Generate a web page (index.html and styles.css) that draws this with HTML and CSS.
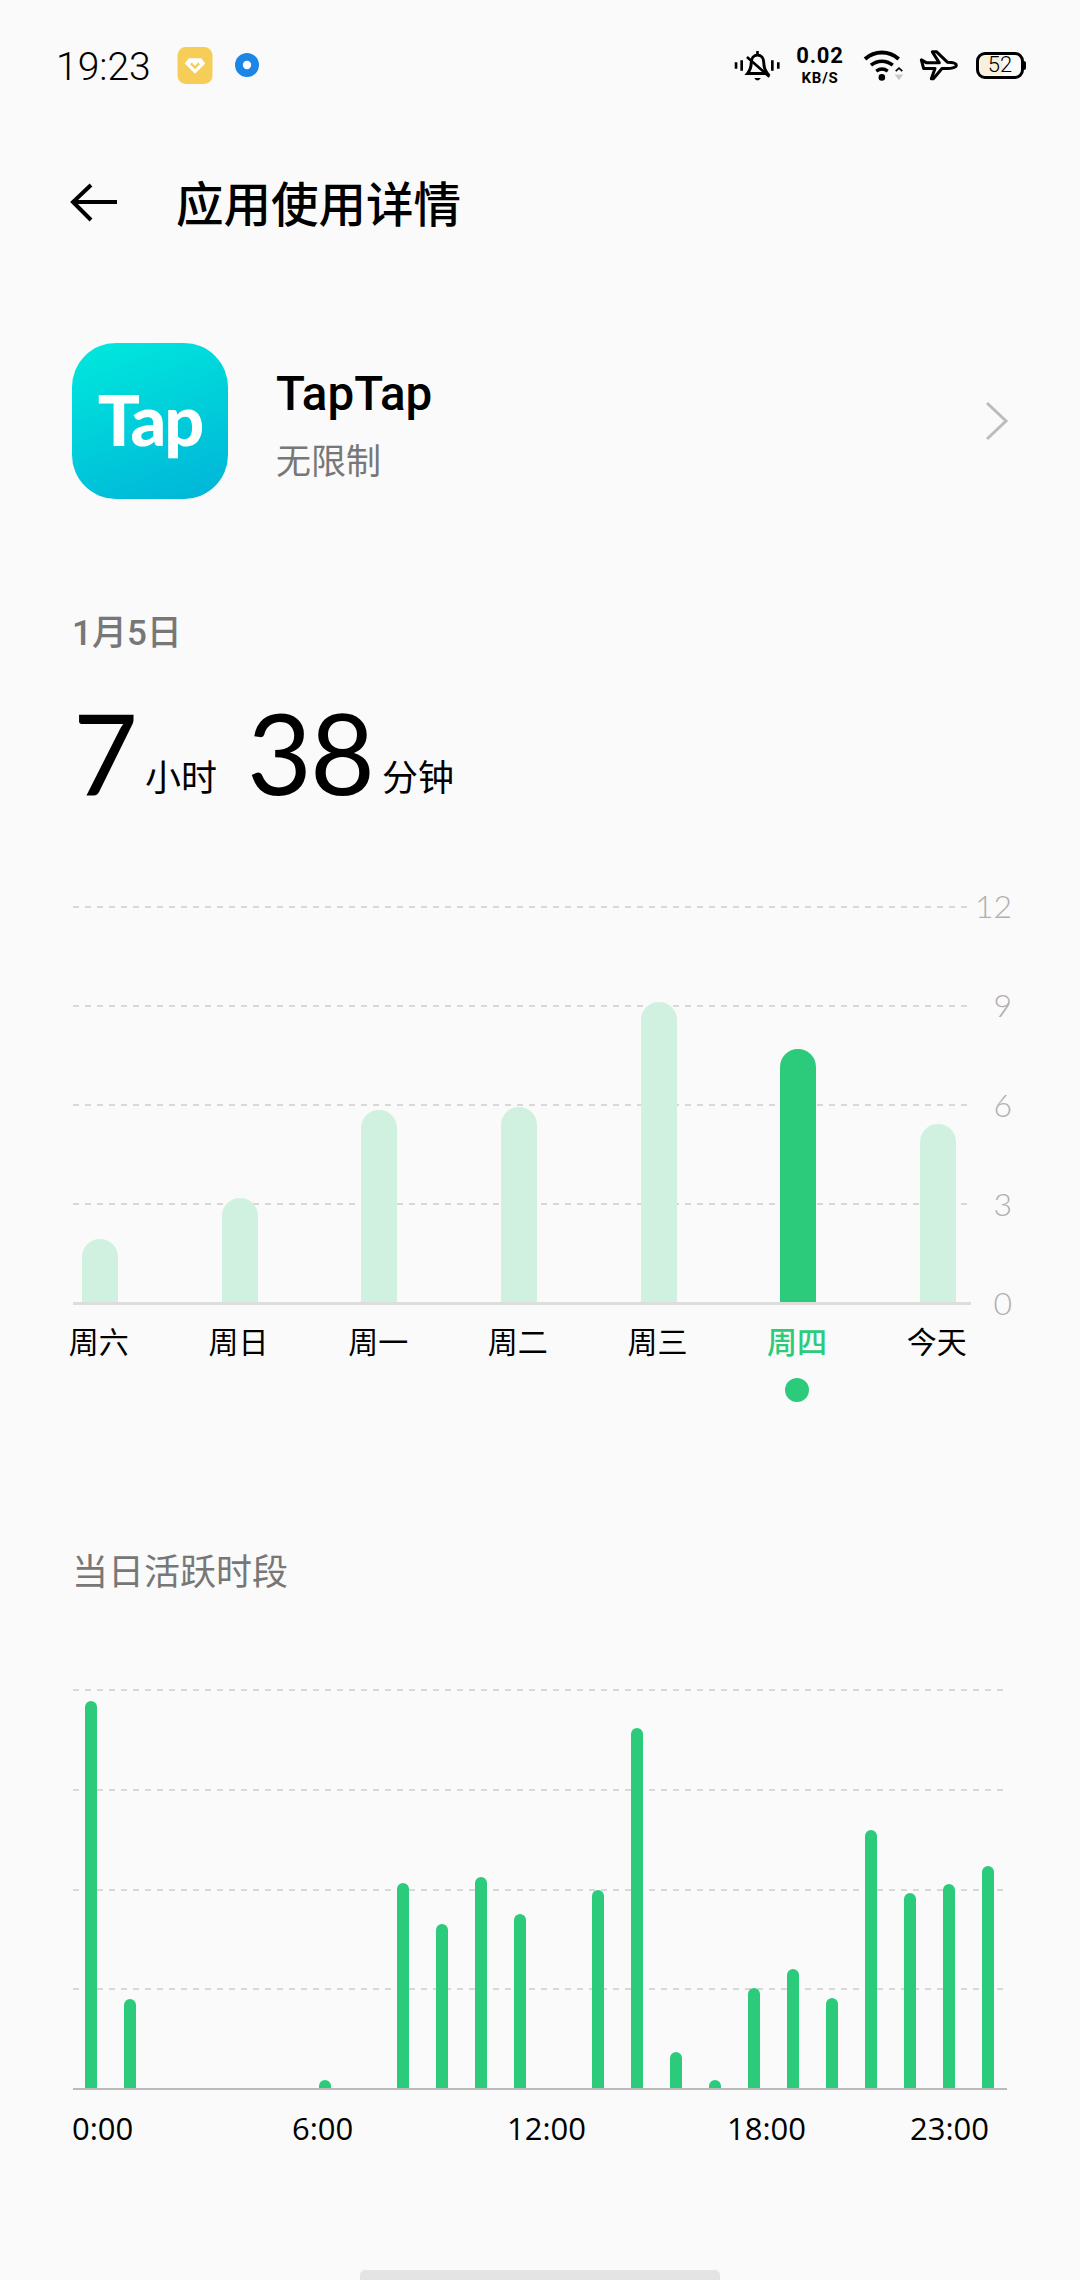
FILE: index.html
```html
<!DOCTYPE html>
<html lang="zh-CN">
<head>
    <meta charset="UTF-8">
    <meta name="viewport" content="width=device-width, initial-scale=1.0">
    <title>应用使用详情</title>
    <link rel="stylesheet" href="styles.css">
</head>
<body>
    <div class="page">
        <!-- 状态栏 -->
        <div class="status-bar">
            <span class="clock">19:23</span>
            <svg class="notif-gem" viewBox="0 0 34 36">
                <rect width="34" height="36" rx="8" fill="#f6cd57"/>
                <path d="M11 11h12l4 5-10 10L7 16z" fill="#fff"/>
                <path d="M13 16l4 4 4-4" fill="none" stroke="#f6cd57" stroke-width="2.4"/>
            </svg>
            <svg class="notif-dot" viewBox="0 0 24 24">
                <circle cx="12" cy="12" r="12" fill="#1b86e6"/>
                <circle cx="12" cy="12" r="4.2" fill="#fff"/>
            </svg>
            <div class="status-right">
                <svg class="ico-bell" viewBox="100 88 140 100">
                    <path d="M105 128v20M122 122v32M215 122v32M233 128v20" fill="none" stroke="#000" stroke-width="8"/>
                    <path d="M140 162c8-10 11-18 11-32 0-14 8-24 19-24s19 10 19 24c0 14 3 22 11 32z" fill="none" stroke="#000" stroke-width="9"/>
                    <path d="M170 94v10M138 112l68 60" fill="none" stroke="#000" stroke-width="8"/>
                    <path d="M160 176h20l-6 7h-8z" fill="#000"/>
                </svg>
                <div class="net-speed"><b>0.02</b><small>KB/S</small></div>
                <svg class="ico-wifi" viewBox="488 88 124 100">
                    <path d="M494 118c30-26 72-26 102 0" fill="none" stroke="#000" stroke-width="12"/>
                    <path d="M512 137c20-16 46-16 66 0" fill="none" stroke="#000" stroke-width="11"/>
                    <path d="M528 155c11-8 24-8 35 0" fill="none" stroke="#000" stroke-width="10"/>
                    <circle cx="545" cy="174" r="10" fill="#000"/>
                    <path d="M587 155l10-9 10 9" fill="none" stroke="#000" stroke-width="5"/>
                    <path d="M584 165h26l-13 18z" fill="#c8c8c8"/>
                </svg>
                <svg class="ico-plane" viewBox="655 90 120 95">
                    <path d="M662 122l16 9h38l-21-33h13l32 31c14 0 27 3 27 9s-13 10-27 10h-16l-26 31h-6l11-31h-34z" fill="none" stroke="#000" stroke-width="9" stroke-linejoin="round"/>
                </svg>
                <div class="battery"><span class="battery-fill"></span><span class="battery-num">52</span></div>
            </div>
        </div>

        <!-- 标题 -->
        <div class="toolbar">
            <svg class="back" viewBox="0 0 48 40">
                <path d="M47 19H4M21 2L3 19l18 18" fill="none" stroke="#000" stroke-width="4"/>
            </svg>
            <h1>应用使用详情</h1>
        </div>

        <!-- 应用信息 -->
        <div class="app-row">
            <div class="app-icon">Tap</div>
            <div class="app-text">
                <div class="app-name">TapTap</div>
                <div class="app-limit">无限制</div>
            </div>
            <svg class="chevron" viewBox="0 0 24 40">
                <path d="M2 2l19 18L2 38" fill="none" stroke="#bcbcbc" stroke-width="3"/>
            </svg>
        </div>

        <div class="date">1月5日</div>
        <div class="total">
            <span class="num">7</span><span class="unit">小时</span>
            <span class="num num-min">38</span><span class="unit">分钟</span>
        </div>

        <!-- 一周使用时长 -->
        <div class="week-chart">
            <div class="week-plot">
                <div class="grid-lines">
                    <i></i><i></i><i></i><i></i>
                </div>
                <div class="week-bars">
                    <span style="height:63px"></span>
                    <span style="height:104px"></span>
                    <span style="height:192px"></span>
                    <span style="height:195px"></span>
                    <span style="height:300px"></span>
                    <span class="active" style="height:253px"></span>
                    <span style="height:178px"></span>
                </div>
            </div>
            <div class="week-axis">
                <span>12</span><span>9</span><span>6</span><span>3</span><span>0</span>
            </div>
        </div>
        <div class="week-labels">
            <div>周六</div>
            <div>周日</div>
            <div>周一</div>
            <div>周二</div>
            <div>周三</div>
            <div class="active">周四<i class="dot"></i></div>
            <div>今天</div>
        </div>

        <div class="section-title">当日活跃时段</div>

        <!-- 当日活跃时段 -->
        <div class="day-plot">
            <div class="grid-lines">
                <i></i><i></i><i></i><i></i>
            </div>
            <div class="day-bars">
                <span style="height:387px"></span>
                <span style="height:89px"></span>
                <span></span><span></span><span></span><span></span>
                <span style="height:8px"></span>
                <span></span>
                <span style="height:205px"></span>
                <span style="height:164px"></span>
                <span style="height:211px"></span>
                <span style="height:174px"></span>
                <span></span>
                <span style="height:198px"></span>
                <span style="height:360px"></span>
                <span style="height:36px"></span>
                <span style="height:8px"></span>
                <span style="height:100px"></span>
                <span style="height:119px"></span>
                <span style="height:90px"></span>
                <span style="height:258px"></span>
                <span style="height:195px"></span>
                <span style="height:204px"></span>
                <span style="height:222px"></span>
            </div>
        </div>
        <div class="day-labels">
            <span>0:00</span>
            <span>6:00</span>
            <span>12:00</span>
            <span>18:00</span>
            <span>23:00</span>
        </div>

        <div class="home-bar"></div>
    </div>
</body>
</html>
```

FILE: styles.css
```css
* {
    box-sizing: border-box;
}
body {
    margin: 0;
    background-color: #fafafa;
    color: #000;
    font-family: Roboto, "Noto Sans CJK SC", sans-serif;
}
.page {
    width: 1080px;
    height: 2280px;
    overflow: hidden;
    display: flex;
    flex-direction: column;
}

/* status bar */
.status-bar {
    height: 130px;
    flex: none;
    display: flex;
    align-items: center;
    padding: 0 56px 0 56px;
}
.clock {
    font-weight: 300;
    font-size: 39px;
    width: 121px;
    padding-top: 4px;
}
.notif-gem {
    width: 36px;
    height: 37px;
}
.notif-dot {
    width: 24px;
    height: 24px;
    margin-left: 22px;
}
.status-right {
    margin-left: auto;
    display: flex;
    align-items: center;
}
.ico-bell {
    width: 47px;
    height: 33px;
}
.net-speed {
    width: 50px;
    margin-left: 14px;
    text-align: center;
    line-height: 1;
}
.net-speed b {
    display: block;
    font-size: 22px;
    font-weight: 700;
    letter-spacing: 0.8px;
    line-height: 26px;
}
.net-speed small {
    display: block;
    font-size: 15px;
    font-weight: 700;
    letter-spacing: 0.8px;
    line-height: 18px;
}
.ico-wifi {
    width: 41px;
    height: 33px;
    margin-left: 18px;
}
.ico-plane {
    width: 40px;
    height: 32px;
    margin-left: 15px;
}
.battery {
    position: relative;
    width: 48px;
    height: 27px;
    margin-left: 17px;
    border: 3px solid #000;
    border-radius: 9px;
    display: flex;
    align-items: center;
    justify-content: center;
}
.battery::after {
    content: "";
    position: absolute;
    right: -5px;
    top: 6px;
    width: 3px;
    height: 9px;
    background-color: #000;
    border-radius: 0 2px 2px 0;
}
.battery-fill {
    position: absolute;
    left: 1px;
    top: 1px;
    bottom: 1px;
    width: 54%;
    background-color: #f8efdc;
    border-radius: 5px 0 0 5px;
}
.battery-num {
    position: relative;
    font-size: 22px;
    font-weight: 300;
    line-height: 20px;
}

/* toolbar */
.toolbar {
    height: 146px;
    flex: none;
    display: flex;
    align-items: center;
    padding-left: 69px;
}
.back {
    width: 50px;
    height: 40px;
}
.toolbar h1 {
    margin: 0 0 4px 57px;
    font-size: 47.5px;
    font-weight: 500;
    font-family: "Noto Sans CJK SC", sans-serif;
}

/* app row */
.app-row {
    margin-top: 67px;
    padding-left: 72px;
    display: flex;
    align-items: center;
}
.app-icon {
    width: 156px;
    height: 156px;
    padding-bottom: 5px;
    border-radius: 44px;
    background: linear-gradient(160deg, #00e9dd, #00b4d8);
    color: #fff;
    font-family: Lato, sans-serif;
    font-weight: 900;
    font-size: 70px;
    letter-spacing: -2px;
    display: flex;
    align-items: center;
    justify-content: center;
}
.app-text {
    margin-left: 48px;
    padding-top: 9px;
}
.app-name {
    font-size: 47.5px;
    font-weight: 500;
    line-height: 60px;
}
.app-limit {
    margin-top: 15px;
    font-size: 35px;
    line-height: 48px;
    color: #777;
}
.chevron {
    width: 24px;
    height: 40px;
    margin-left: auto;
    margin-right: 71px;
}

/* totals */
.date {
    margin-top: 115px;
    padding-left: 72px;
    font-size: 35px;
    font-weight: 500;
    line-height: 40px;
    color: #777;
}
.total {
    margin-top: 35px;
    padding-left: 73px;
    height: 126px;
    display: flex;
    align-items: flex-end;
}
.num {
    font-family: Lato, sans-serif;
    font-weight: 400;
    font-size: 112px;
    line-height: 126px;
    letter-spacing: -2px;
}
.num-min {
    margin-left: 30px;
}
.unit {
    margin-left: 9px;
    padding-bottom: 11px;
    font-size: 36px;
    line-height: 50px;
}

/* charts */
.grid-lines {
    position: absolute;
    inset: 0;
    display: flex;
    flex-direction: column;
}
.grid-lines i {
    height: 25%;
    background: repeating-linear-gradient(90deg, #d8d8d8 0 6px, transparent 6px 12px) top left / 100% 2px no-repeat;
}
.week-chart {
    margin-top: 91px;
    padding-left: 73px;
    display: flex;
}
.week-plot {
    position: relative;
    width: 898px;
    height: 399px;
    border-bottom: 3px solid #ddd;
}
.week-bars {
    position: relative;
    height: 100%;
    padding-left: 9px;
    display: flex;
    align-items: flex-end;
    gap: 103.67px;
}
.week-bars span {
    width: 36px;
    border-radius: 18px 18px 0 0;
    background-color: #d0f1e0;
}
.week-bars .active {
    background-color: #2ccb7c;
}
.week-axis {
    width: 41px;
    height: 437px;
    margin-top: -20px;
    display: flex;
    flex-direction: column;
    justify-content: space-between;
    align-items: flex-end;
    font-family: Lato, sans-serif;
    font-weight: 300;
    font-size: 32px;
    line-height: 40px;
    color: #b0b0b0;
}
.week-labels {
    padding-left: 29px;
    margin-top: 0;
    height: 184px;
    display: grid;
    grid-template-columns: repeat(7, 139.67px);
    text-align: center;
    font-size: 30px;
    line-height: 40px;
}
.week-labels .active {
    color: #2ccb7c;
    font-weight: 500;
}
.dot {
    display: block;
    width: 24px;
    height: 24px;
    margin: 15px auto 0;
    border-radius: 50%;
    background-color: #2ccb7c;
}
.section-title {
    margin-top: 42px;
    padding-left: 72px;
    font-size: 36px;
    line-height: 48px;
    color: #777;
}
.day-plot {
    position: relative;
    width: 934px;
    height: 401px;
    margin: 92px 0 0 73px;
    border-bottom: 2px solid #bbb;
}
.day-bars {
    position: relative;
    height: 100%;
    padding-left: 12px;
    display: flex;
    align-items: flex-end;
    gap: 27px;
}
.day-bars span {
    width: 12px;
    border-radius: 6px 6px 0 0;
    background-color: #2ccb7c;
}
.day-labels {
    margin-top: 18px;
    padding-left: 72px;
    display: grid;
    grid-template-columns: 220px 215px 220px 183px auto;
    font-family: "Open Sans", sans-serif;
    font-size: 31px;
    line-height: 40px;
}
.home-bar {
    width: 360px;
    height: 10px;
    margin: auto auto 0;
    background-color: #e4e4e4;
    border-radius: 5px 5px 0 0;
}
```
